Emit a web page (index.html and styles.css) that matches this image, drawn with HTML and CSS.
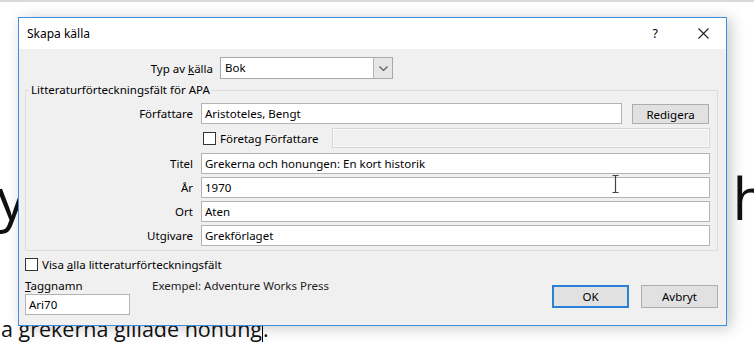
FILE: index.html
```html
<!DOCTYPE html>
<html lang="sv">
<head>
  <meta charset="UTF-8">
  <title>Skapa källa</title>
  <link rel="stylesheet" href="styles.css">
</head>
<body>
  <div class="doc">
    <div class="doc-heading"><span>y</span><span>h</span></div>
    <p class="doc-text">a grekerna gillade honung<span class="caret"></span>.</p>
  </div>

  <div class="dialog">
    <div class="titlebar">
      <span class="title">Skapa källa</span>
      <span class="help">?</span>
      <svg class="close" width="11" height="11" viewBox="0 0 11 11">
        <path d="M0.5 0.5 L10.5 10.5 M10.5 0.5 L0.5 10.5" stroke="#222" stroke-width="1.1" fill="none"/>
      </svg>
    </div>

    <div class="dialog-body">
      <div class="type-row">
        <span class="type-label">Typ av <u>k</u>älla</span>
        <div class="select">
          <span class="select-value">Bok</span>
          <span class="select-btn">
            <svg width="9" height="5" viewBox="0 0 9 5"><path d="M0.5 0.5 L4.5 4.5 L8.5 0.5" stroke="#555" stroke-width="1.1" fill="none"/></svg>
          </span>
        </div>
      </div>

      <div class="group">
        <span class="legend">Litteraturförteckningsfält för APA</span>
        <div class="fields">
          <span class="field-label">Författare</span>
          <div class="author-row">
            <div class="input">Aristoteles, Bengt</div>
            <button class="btn btn-edit">Redigera</button>
          </div>

          <span></span>
          <div class="corp-row">
            <span class="checkbox"></span>
            <span class="corp-label">Företag Författare</span>
            <div class="input input-disabled"></div>
          </div>

          <span class="field-label">Titel</span>
          <div class="input">Grekerna och honungen: En kort historik</div>

          <span class="field-label">År</span>
          <div class="input">1970</div>

          <span class="field-label">Ort</span>
          <div class="input">Aten</div>

          <span class="field-label">Utgivare</span>
          <div class="input">Grekförlaget</div>
        </div>
      </div>

      <div class="check-row">
        <span class="checkbox"></span>
        <span>Visa <u>a</u>lla litteraturförteckningsfält</span>
      </div>

      <div class="footer">
        <div class="tag-col">
          <span><u>T</u>aggnamn</span>
          <div class="input tag-input">Ari70</div>
        </div>
        <span class="example">Exempel: Adventure Works Press</span>
        <div class="buttons">
          <button class="btn btn-default">OK</button>
          <button class="btn">Avbryt</button>
        </div>
      </div>
    </div>

    <svg class="ibeam" width="7" height="18" viewBox="0 0 7 18">
      <path d="M0.5 0.5 H6.5 M3.5 0.5 V17.5 M0.5 17.5 H6.5" stroke="#444" stroke-width="1.2" fill="none"/>
    </svg>
  </div>
</body>
</html>
```

FILE: styles.css
```css
html, body {
  margin: 0;
  height: 100%;
  overflow: hidden;
}
body {
  background: #ffffff;
  border-top: 2px solid #d9d9d9;
  box-sizing: border-box;
  position: relative;
  font-family: "Open Sans", "Noto Sans", sans-serif;
  color: #111;
}
.doc-heading {
  display: flex;
  justify-content: space-between;
  margin: 166px -14px 0 -3px;
  font-size: 58px;
  line-height: 60px;
}
.doc-text {
  margin: 89px 0 0 1px;
  font-size: 21.5px;
  line-height: 24px;
}
.caret {
  display: inline-block;
  width: 1px;
  height: 21px;
  background: #000;
  vertical-align: -5px;
}

/* dialog */
.dialog {
  position: absolute;
  left: 18px;
  top: 15px;
  width: 709px;
  height: 309px;
  box-sizing: border-box;
  border: 1px solid #3d8ee0;
  background: #f0f0f0;
  box-shadow: 4px 2px 14px rgba(0,0,0,0.22);
  font-family: "Noto Sans", "Open Sans", sans-serif;
  font-size: 11.5px;
  color: #000;
  display: flex;
  flex-direction: column;
}
.titlebar {
  height: 31px;
  background: #fff;
  display: flex;
  align-items: center;
  padding-left: 8px;
  font-size: 12px;
}
.title {
  flex: 1;
}
.help {
  font-size: 12.5px;
  margin-right: 40px;
}
.close {
  margin-right: 17px;
}
.dialog-body {
  padding: 8px 8px 0 6px;
  display: flex;
  flex-direction: column;
}
.type-row {
  display: flex;
  align-items: center;
  gap: 7px;
}
.type-label {
  width: 188px;
  text-align: right;
}
.select {
  width: 173px;
  height: 22px;
  box-sizing: border-box;
  border: 1px solid #a9a9a9;
  background: #fff;
  display: flex;
}
.select-value {
  flex: 1;
  padding-left: 4px;
  line-height: 20px;
}
.select-btn {
  width: 18px;
  background: #e6e6e6;
  border-left: 1px solid #b5b5b5;
  display: flex;
  align-items: center;
  justify-content: center;
}

.group {
  position: relative;
  margin-top: 11px;
  border: 1px solid #dcdcdc;
  padding: 12px 7px 4px 0;
}
.legend {
  position: absolute;
  top: -9px;
  left: 3px;
  padding: 0 2px;
  background: #f0f0f0;
  line-height: 16px;
}
.fields {
  display: grid;
  grid-template-columns: 167px 1fr;
  column-gap: 8px;
  row-gap: 3px;
  align-items: center;
}
.field-label {
  text-align: right;
}
.input {
  height: 21px;
  box-sizing: border-box;
  border: 1px solid #b3b3b3;
  background: #fff;
  padding-left: 3px;
  line-height: 19px;
  white-space: nowrap;
}
.author-row {
  display: flex;
  gap: 10px;
  padding-right: 1px;
}
.author-row .input {
  flex: 1;
}
.corp-row {
  display: flex;
  align-items: center;
  margin: 1px 0 2px;
}
.corp-row .checkbox {
  margin-left: 2px;
  margin-right: 4px;
}
.corp-row .input-disabled {
  margin-left: auto;
  width: 378px;
  height: 20px;
  background: #f0f0f0;
  border-color: #d5d5d5;
  box-shadow: inset 0 0 0 1px #fbfbfb;
}
.checkbox {
  width: 13px;
  height: 13px;
  box-sizing: border-box;
  border: 1px solid #333;
  background: #fff;
  flex: none;
}
.check-row {
  display: flex;
  align-items: center;
  gap: 4px;
  margin-top: 6px;
  line-height: 15px;
}

.footer {
  display: flex;
  align-items: flex-start;
  margin-top: 6px;
}
.tag-col {
  width: 127px;
  display: flex;
  flex-direction: column;
  gap: 1px;
  line-height: 15px;
}
.tag-input {
  width: 105px;
}
.example {
  flex: 1;
  line-height: 15px;
  color: #222;
}
.buttons {
  display: flex;
  gap: 12px;
  margin-top: 7px;
}
.btn {
  width: 77px;
  height: 23px;
  box-sizing: border-box;
  border: 1px solid #adadad;
  background: #e1e1e1;
  font: inherit;
  color: #000;
  padding: 0;
}
.btn-default {
  border: 2px solid #2b7fd4;
}
.btn-edit {
  width: 77px;
  height: 20px;
  margin-top: 1px;
}
.ibeam {
  position: absolute;
  left: 593px;
  top: 157px;
}
```
